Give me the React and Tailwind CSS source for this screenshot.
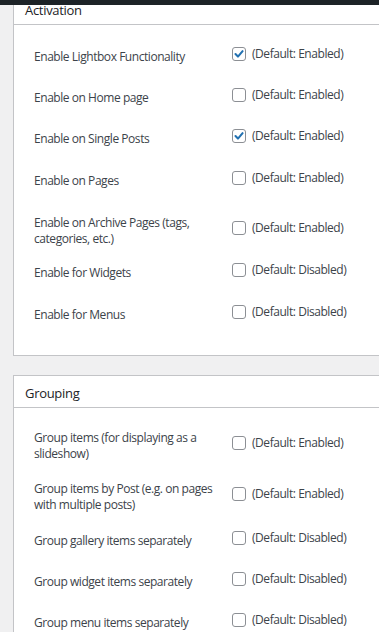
const activation = [
  { label: "Enable Lightbox Functionality", checked: true, def: "Enabled", h: "h-[41px]" },
  { label: "Enable on Home page", checked: false, def: "Enabled", h: "h-[41px]" },
  { label: "Enable on Single Posts", checked: true, def: "Enabled", h: "h-[42px]" },
  { label: "Enable on Pages", checked: false, def: "Enabled", h: "h-[42px]" },
  { label: "Enable on Archive Pages (tags, categories, etc.)", checked: false, def: "Enabled", h: "h-[50px]", tall: true },
  { label: "Enable for Widgets", checked: false, def: "Disabled", h: "h-[42px]" },
  { label: "Enable for Menus", checked: false, def: "Disabled", h: "h-[42px]" },
];

const grouping = [
  { label: "Group items (for displaying as a slideshow)", checked: false, def: "Enabled", h: "h-[51px]", tall: true },
  { label: "Group items by Post (e.g. on pages with multiple posts)", checked: false, def: "Enabled", h: "h-[52px]", tall: true },
  { label: "Group gallery items separately", checked: false, def: "Disabled", h: "h-[41px]" },
  { label: "Group widget items separately", checked: false, def: "Disabled", h: "h-[41px]" },
  { label: "Group menu items separately", checked: false, def: "Disabled", h: "h-[41px]" },
];

function Checkbox({ checked }) {
  return (
    <span className="flex h-[14px] w-[14px] shrink-0 items-center justify-center rounded-[3px] border border-[#8c8f94] bg-white">
      {checked && (
        <svg viewBox="0 0 14 14" className="h-[14px] w-[14px]">
          <path d="M2.9 7.1 L5.8 10 L11.2 3.7" fill="none" stroke="#2271b1" strokeWidth="2.4" strokeLinecap="round" strokeLinejoin="round" />
        </svg>
      )}
    </span>
  );
}

function Row({ row }) {
  return (
    <div className={`flex ${row.h}`}>
      <div className="w-[198px] shrink-0 pr-[13px] pt-[15px] leading-[15.5px] text-[#3c434a]">{row.label}</div>
      <div className={`flex items-center gap-[6px] ${row.tall ? "pt-[20px]" : "pt-[12px]"} self-start`}>
        <Checkbox checked={row.checked} />
        <span className="pt-px leading-[14px] text-[#3c434a]">(Default: {row.def})</span>
      </div>
    </div>
  );
}

function Panel({ title, rows, className, body }) {
  return (
    <section className={`border-y border-l border-[#c3c4c7] bg-white ${className}`}>
      <h2 className="flex h-[32px] items-center border-b border-[#c3c4c7] pl-[11px] pt-[4px] text-[13px] font-medium tracking-[-0.3px] text-[#1d2327]">
        {title}
      </h2>
      <div className={`pl-[20px] ${body}`}>
        {rows.map((row) => (
          <Row key={row.label} row={row} />
        ))}
      </div>
    </section>
  );
}

export default function App() {
  return (
    <div
      className="relative h-[632px] overflow-hidden bg-[#f0f0f1] text-[12px] tracking-[-0.45px]"
      style={{ fontFamily: "'Open Sans', 'Noto Sans', sans-serif" }}
    >
      <div className="absolute inset-x-0 top-0 z-10 h-[5px] bg-[#1d2327]" />
      <div className="-mt-[8px] pl-[13px]">
        <Panel title="Activation" rows={activation} body="pt-[9px] pb-[21px]" />
        <Panel title="Grouping" rows={grouping} className="mt-[19px]" body="pt-[7px] pb-[20px]" />
      </div>
    </div>
  );
}
